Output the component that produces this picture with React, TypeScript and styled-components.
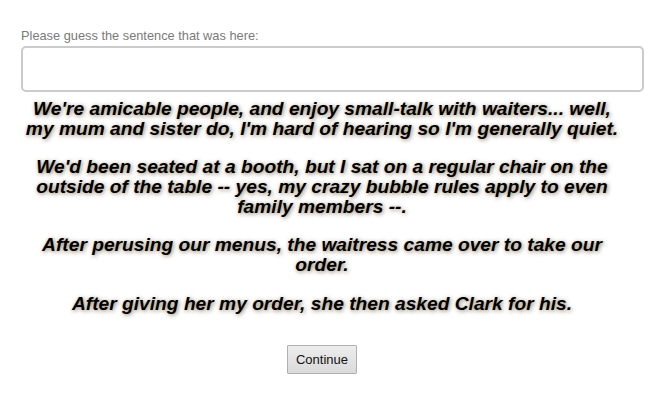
import React from "react";
import styled, { createGlobalStyle } from "styled-components";

const Global = createGlobalStyle`
  html, body { margin: 0; padding: 0; background: #fff; }
  body { font-family: "Liberation Sans", Arial, sans-serif; }
`;

const Page = styled.div`
  padding: 28px 0 0 21px;
  width: 602px;
  display: flex;
  flex-direction: column;
`;

const Label = styled.label`
  font-size: 12.8px;
  color: #7a7a7a;
  line-height: 15px;
  margin-bottom: 3px;
`;

const Input = styled.input`
  box-sizing: border-box;
  width: 623px;
  height: 46px;
  border: 2px solid #cbcbcb;
  border-radius: 5px;
  outline: none;
  font-size: 14px;
  padding: 4px 8px;
`;

const Story = styled.div`
  margin-top: 7px;
  text-align: center;
  font-size: 19.2px;
  font-weight: bold;
  font-style: italic;
  line-height: 20px;
  color: #000;
  text-shadow: 1px 1px 4px rgba(100, 80, 45, 0.75);
`;

const Para = styled.p`
  margin: 0 0 18.2px 0;
`;

const Actions = styled.div`
  display: flex;
  justify-content: center;
  margin-top: 13.5px;
`;

const Button = styled.button`
  font-family: "Liberation Sans", Arial, sans-serif;
  font-size: 13px;
  color: #111;
  width: 70px;
  height: 29px;
  border: 1px solid #b0b0b0;
  border-radius: 1px;
  background: linear-gradient(#ededed, #dadada);
  padding: 0;
`;

export default function App() {
  return (
    <>
      <Global />
      <Page>
        <Label>Please guess the sentence that was here:</Label>
        <Input type="text" />
        <Story>
          <Para>
            We're amicable people, and enjoy small-talk with waiters... well,
            my mum and sister do, I'm hard of hearing so I'm generally quiet.
          </Para>
          <Para>
            We'd been seated at a booth, but I sat on a regular chair on the
            outside of the table -- yes, my crazy bubble rules apply to even
            family members --.
          </Para>
          <Para>
            After perusing our menus, the waitress came over to take our order.
          </Para>
          <Para>After giving her my order, she then asked Clark for his.</Para>
        </Story>
        <Actions>
          <Button>Continue</Button>
        </Actions>
      </Page>
    </>
  );
}
